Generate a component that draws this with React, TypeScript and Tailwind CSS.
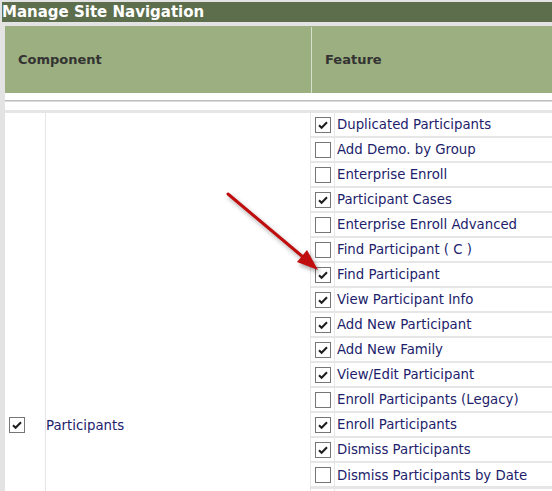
import { Fragment } from 'react'

// ── Data ──

const FEATURES: { label: string; on: boolean }[] = [
  { label: 'Duplicated Participants', on: true },
  { label: 'Add Demo. by Group', on: false },
  { label: 'Enterprise Enroll', on: false },
  { label: 'Participant Cases', on: true },
  { label: 'Enterprise Enroll Advanced', on: false },
  { label: 'Find Participant ( C )', on: false },
  { label: 'Find Participant', on: true },
  { label: 'View Participant Info', on: true },
  { label: 'Add New Participant', on: true },
  { label: 'Add New Family', on: true },
  { label: 'View/Edit Participant', on: true },
  { label: 'Enroll Participants (Legacy)', on: false },
  { label: 'Enroll Participants', on: true },
  { label: 'Dismiss Participants', on: true },
  { label: 'Dismiss Participants by Date', on: false },
]

// rows continue below the fold; the component cell spans all of them
const TOTAL_ROWS = 25

// ── Pieces ──

function Box({ checked }: { checked: boolean }) {
  return (
    <span className="flex h-[16px] w-[16px] items-center justify-center border border-[#767676] bg-white">
      {checked && (
        <svg width="12" height="12" viewBox="0 0 12 12">
          <path d="M2 6.2 L4.6 8.8 L10 3.2" fill="none" stroke="#1e1e1e" strokeWidth="2" />
        </svg>
      )}
    </span>
  )
}

function Arrow() {
  return (
    <svg
      className="pointer-events-none absolute left-0 top-0"
      width="552"
      height="491"
      style={{ filter: 'drop-shadow(2px 3px 2px rgba(0,0,0,0.35))' }}
    >
      <line x1="228" y1="194" x2="303" y2="257" stroke="#c00d0d" strokeWidth="3" strokeLinecap="round" />
      <polygon points="318,270 297,262 307,250" fill="#c00d0d" />
    </svg>
  )
}

// ── Page ──

export default function App() {
  return (
    <div
      className="relative h-[491px] w-[552px] overflow-hidden bg-[#e3e3e3] pt-[2px]"
      style={{ fontFamily: '"DejaVu Sans", Verdana, sans-serif' }}
    >
      <div className="ml-[2px] flex h-[20px] items-center bg-[#5d6e4d] pt-px text-[15px] font-bold leading-none text-white">
        Manage Site Navigation
      </div>

      <div className="ml-[5px] mt-[4px] w-[700px]">
        {/* column headers */}
        <div className="flex h-[67px] bg-[#9caf80] pt-px text-[13px] font-bold text-[#333]">
          <div className="flex w-[306px] items-center pl-[13px]">Component</div>
          <div className="w-px bg-[#d6dfca]" />
          <div className="flex flex-1 items-center pl-[13px]">Feature</div>
        </div>

        <div className="h-[7px] bg-white" />
        <div className="h-[2px] border-t border-[#bdbdbd] bg-[#dcdcdc]" />
        <div className="h-[8px] bg-white" />

        {/* body */}
        <div className="flex gap-px bg-[#e6e6e6] pt-[3px] text-[13.3px] text-[#221d6b]">
          <div className="flex h-[624px] w-[40px] items-center bg-white pl-[4px]">
            <Box checked />
          </div>
          <div className="flex w-[264px] items-center bg-white pt-px">Participants</div>
          <div className="grid flex-1 grid-cols-[23px_1fr] gap-x-px gap-y-[2px]">
            {Array.from({ length: TOTAL_ROWS }).map((_, i) => {
              const f = FEATURES[i]
              return (
                <Fragment key={i}>
                  <div className="flex h-[23px] items-center justify-center bg-white">
                    {f && <Box checked={f.on} />}
                  </div>
                  <div className="flex h-[23px] items-center bg-white pl-[2px] pt-px">{f?.label}</div>
                </Fragment>
              )
            })}
          </div>
        </div>
      </div>

      <Arrow />
    </div>
  )
}
